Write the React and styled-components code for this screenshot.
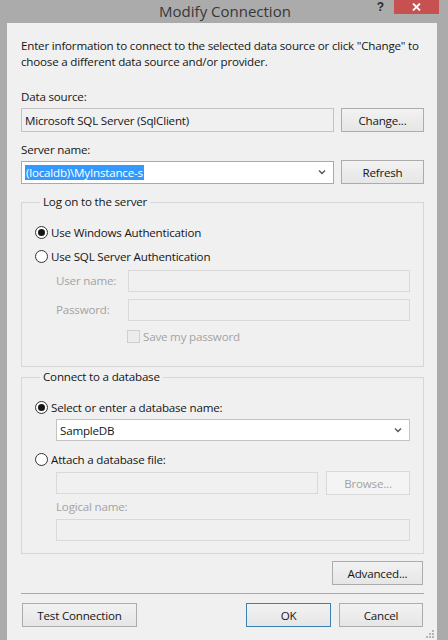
import styled, { createGlobalStyle } from "styled-components";

const GlobalStyle = createGlobalStyle`
  html, body {
    margin: 0;
    background: #ababab;
    font-family: "Open Sans", "Noto Sans", sans-serif;
    font-size: 11.6px;
    letter-spacing: -0.2px;
    color: #161616;
  }
`;

const Window = styled.div`
  width: 448px;
  height: 640px;
  display: flex;
  flex-direction: column;
  background: #ababab;
  overflow: hidden;
`;

const TitleBar = styled.div`
  height: 23px;
  flex: none;
  display: grid;
  grid-template-columns: 1fr auto 1fr;
  align-items: start;
`;

const Title = styled.div`
  grid-column: 2;
  font-size: 15px;
  letter-spacing: 0;
  line-height: 20px;
  color: #383838;
  padding: 1px 0 0 2px;
`;

const Controls = styled.div`
  justify-self: end;
  display: flex;
  align-items: flex-start;
  gap: 10px;
  padding-right: 9px;
`;

const Help = styled.span`
  font-family: "Liberation Sans", sans-serif;
  font-weight: bold;
  font-size: 12px;
  line-height: 14px;
  color: #2a2a2a;
`;

const Close = styled.div`
  width: 45px;
  height: 14px;
  background: #c75050;
  display: flex;
  align-items: center;
  justify-content: center;
`;

const Client = styled.div`
  flex: 1;
  margin: 0 11px 0 7px;
  background: #f0f0f0;
  padding: 15px 13px 0 14px;
  display: flex;
  flex-direction: column;
`;

const Intro = styled.p`
  margin: 0;
  line-height: 16px;
  white-space: nowrap;
`;

const Label = styled.div`
  margin-top: ${p => p.$top || 0}px;
  line-height: 16px;
  color: ${p => (p.$disabled ? "#a3a3a3" : "#161616")};
`;

const Row = styled.div`
  display: flex;
  align-items: center;
  gap: ${p => p.$gap || 7}px;
  margin-top: ${p => p.$top || 0}px;
`;

const TextBox = styled.div`
  flex: 1 1 auto;
  min-width: 0;
  height: ${p => p.$h || 22}px;
  box-sizing: border-box;
  border: 1px solid ${p => (p.$focus ? "#7eb4ea" : p.$disabled ? "#d9d9d9" : "#c3c3c3")};
  background: ${p => (p.$white ? "#ffffff" : "#f0f0f0")};
  display: flex;
  align-items: center;
  padding: 0 2px 0 2px;
  white-space: nowrap;
`;

const Value = styled.span`
  flex: 1;
  padding-left: 1px;
`;

const Selected = styled.span`
  background: #3399ff;
  color: #ffffff;
  line-height: 17px;
  padding: 0 1px;
`;

const Chevron = styled.svg`
  margin-right: 5px;
  flex: none;
`;

const Button = styled.button`
  width: ${p => p.$w}px;
  height: 24px;
  flex: none;
  box-sizing: border-box;
  padding: 0;
  font: inherit;
  letter-spacing: inherit;
  border: 1px solid ${p => (p.$default ? "#3c7fb1" : p.disabled ? "#d9d9d9" : "#acacac")};
  background: ${p => (p.disabled ? "#f4f4f4" : "linear-gradient(#f2f2f2, #e6e6e6)")};
  color: ${p => (p.disabled ? "#a3a3a3" : "#161616")};
`;

const Group = styled.fieldset`
  margin: ${p => p.$top}px 0 0;
  padding: 0 13px ${p => p.$bottom}px 13px;
  border: 1px solid #d6d6d6;
  min-width: 0;
  display: flex;
  flex-direction: column;
`;

const Legend = styled.legend`
  margin-left: 5px;
  padding: 0 3px;
  line-height: 16px;
`;

const Radio = styled.div`
  display: flex;
  align-items: center;
  gap: 3px;
  height: 18px;
  margin-top: ${p => p.$top}px;
`;

const RadioMark = styled.span`
  width: 13px;
  height: 13px;
  box-sizing: border-box;
  border-radius: 50%;
  border: 1px solid #333333;
  background: #ffffff;
  display: flex;
  align-items: center;
  justify-content: center;
  &::after {
    content: "";
    width: 7px;
    height: 7px;
    border-radius: 50%;
    background: ${p => (p.$on ? "#161616" : "transparent")};
  }
`;

const Indent = styled.div`
  margin-left: 21px;
  margin-top: ${p => p.$top || 0}px;
  display: flex;
  flex-direction: column;
`;

const Credentials = styled.div`
  display: grid;
  grid-template-columns: 72px 1fr;
  row-gap: 7px;
  align-items: center;
  margin: 5px 0 0 21px;
`;

const Check = styled.div`
  grid-column: 2;
  display: flex;
  align-items: center;
  gap: 3px;
  height: 14px;
  margin-top: 1px;
  margin-left: -1px;
  color: #a3a3a3;
`;

const CheckBox = styled.span`
  width: 13px;
  height: 13px;
  box-sizing: border-box;
  border: 1px solid #cfcfcf;
  background: #ececec;
`;

const Advanced = styled(Button)`
  align-self: flex-end;
  margin: 7px 1px 0 0;
`;

const Separator = styled.div`
  margin-top: 8px;
  height: 1px;
  background: #a9a9a9;
`;

const Footer = styled.div`
  display: flex;
  gap: 8px;
  margin: 9px 1px 0 1px;
`;

const Spacer = styled.div`
  flex: 1;
`;

const Grip = styled.svg`
  align-self: flex-end;
  margin: 3px -10px 0 0;
`;

const ChevronIcon = () => (
  <Chevron width="8" height="6" viewBox="0 0 8 6">
    <path d="M1 1.5 L4 4.5 L7 1.5" fill="none" stroke="#555" strokeWidth="1.4" />
  </Chevron>
);

const App = () => (
  <>
    <GlobalStyle />
    <Window>
      <TitleBar>
        <Title>Modify Connection</Title>
        <Controls>
          <Help>?</Help>
          <Close>
            <svg width="9" height="8" viewBox="0 0 9 8">
              <path d="M1 0.5 L8 7.5 M8 0.5 L1 7.5" stroke="#fff" strokeWidth="1.8" />
            </svg>
          </Close>
        </Controls>
      </TitleBar>
      <Client>
        <Intro>
          Enter information to connect to the selected data source or click "Change" to
          <br />
          choose a different data source and/or provider.
        </Intro>

        <Label $top={19}>Data source:</Label>
        <Row $top={3}>
          <TextBox $h={24}>
            <Value>Microsoft SQL Server (SqlClient)</Value>
          </TextBox>
          <Button $w={83}>Change...</Button>
        </Row>

        <Label $top={10}>Server name:</Label>
        <Row $top={2}>
          <TextBox $h={23} $white $focus>
            <Value>
              <Selected>(localdb)\MyInstance-s</Selected>
            </Value>
            <ChevronIcon />
          </TextBox>
          <Button $w={83}>Refresh</Button>
        </Row>

        <Group $top={10} $bottom={23}>
          <Legend>Log on to the server</Legend>
          <Radio $top={13}>
            <RadioMark $on />
            Use Windows Authentication
          </Radio>
          <Radio $top={6}>
            <RadioMark />
            Use SQL Server Authentication
          </Radio>
          <Credentials>
            <Label $disabled>User name:</Label>
            <TextBox $disabled />
            <Label $disabled>Password:</Label>
            <TextBox $disabled />
            <Check>
              <CheckBox />
              Save my password
            </Check>
          </Credentials>
        </Group>

        <Group $top={2} $bottom={12}>
          <Legend>Connect to a database</Legend>
          <Radio $top={13}>
            <RadioMark $on />
            Select or enter a database name:
          </Radio>
          <Indent $top={3}>
            <TextBox $white>
              <Value>SampleDB</Value>
              <ChevronIcon />
            </TextBox>
          </Indent>
          <Radio $top={9}>
            <RadioMark />
            Attach a database file:
          </Radio>
          <Indent $top={3}>
            <Row $gap={8}>
              <TextBox $disabled />
              <Button $w={84} disabled>Browse...</Button>
            </Row>
            <Label $top={4} $disabled>Logical name:</Label>
            <Row $top={4}>
              <TextBox $disabled />
            </Row>
          </Indent>
        </Group>

        <Advanced $w={91}>Advanced...</Advanced>
        <Separator />
        <Footer>
          <Button $w={115}>Test Connection</Button>
          <Spacer />
          <Button $w={85} $default>OK</Button>
          <Button $w={84}>Cancel</Button>
        </Footer>
        <Grip width="8" height="8" viewBox="0 0 8 8">
          <g fill="#b5b5b5">
            <rect x="6" y="0" width="2" height="2" />
            <rect x="3" y="3" width="2" height="2" />
            <rect x="6" y="3" width="2" height="2" />
            <rect x="0" y="6" width="2" height="2" />
            <rect x="3" y="6" width="2" height="2" />
            <rect x="6" y="6" width="2" height="2" />
          </g>
        </Grip>
      </Client>
    </Window>
  </>
);

export default App;
